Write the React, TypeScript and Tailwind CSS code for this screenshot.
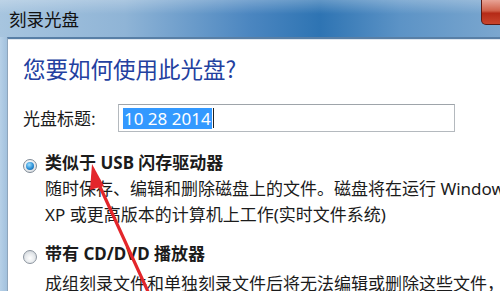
export default function App() {
  return (
    <div className="relative w-[500px] h-[291px] overflow-hidden bg-[#a9c8e3] font-['Noto_Sans','Noto_Sans_CJK_SC',sans-serif] text-[#1b1b1b]">
      {/* title bar */}
      <div className="relative flex h-[37px] items-start bg-[linear-gradient(90deg,#a7c5df_0%,#8fb4d6_25%,#4b86c0_50%,#2e74b3_64%,#5c93c6_80%,#7ba7cf_100%)]">
        <div className="absolute inset-x-0 top-0 h-[14px] bg-[linear-gradient(180deg,rgba(255,255,255,0.25),rgba(255,255,255,0))]" />
        <span className="relative ml-[9px] mt-[7px] font-['Noto_Sans_CJK_SC',sans-serif] text-[17.5px] leading-[24px] text-[#111]">刻录光盘</span>
        <div className="relative ml-auto mr-[-24px] h-[25px] w-[43px] rounded-b-[5px] border border-t-0 border-[#5a1a14] bg-[linear-gradient(180deg,#e8a395_0%,#d0614a_45%,#b52a17_55%,#c9452d_100%)]" />
      </div>
      {/* body */}
      <div className="flex h-[254px]">
        <div className="w-[7px] shrink-0 bg-[linear-gradient(90deg,#b6d0e7,#a2c1dd)]" />
        <div className="flex-1 border-l border-t-2 border-l-[#8ea5bb] border-t-[#587fa6] bg-white">
          <div className="h-full border-t border-[#dfe7ef] pl-[15px]">
            <div className="mt-[13px] font-['Noto_Sans_CJK_SC',sans-serif] text-[22.5px] leading-[30px] text-[#2340a0] whitespace-nowrap">您要如何使用此光盘?</div>
            <div className="mt-[21px] flex items-center">
              <span className="w-[95px] font-['Noto_Sans_CJK_SC',sans-serif] text-[17px] leading-[24px]">光盘标题:</span>
              <div className="flex h-[28px] w-[337px] items-center border border-[#b4b9be] border-t-[#9ea4aa] pl-[4px]">
                <span className="bg-[#3399ff] px-[1px] text-[17px] leading-[21px] text-white">10 28 2014</span>
                <span className="ml-[1px] h-[20px] w-[1px] bg-[#222]" />
              </div>
            </div>
            <div className="mt-[19px] flex items-center">
              <span className="mt-[6px] flex h-[14px] w-[14px] items-center justify-center rounded-full border border-[#7f8a96] bg-[radial-gradient(circle_at_40%_35%,#ffffff,#d4d9de)]">
                <span className="h-[8px] w-[8px] rounded-full bg-[radial-gradient(circle_at_40%_35%,#9fe0ff_0%,#2a8fd6_55%,#124e8c_100%)]" />
              </span>
              <span className="ml-[8px] text-[17px] font-bold leading-[24px] whitespace-nowrap">类似于 USB 闪存驱动器</span>
            </div>
            <div className="ml-[22px] mt-[1px] text-[17px] leading-[26px] whitespace-nowrap">
              <div>随时保存、编辑和删除磁盘上的文件。磁盘将在运行 Windows</div>
              <div>XP 或更高版本的计算机上工作(实时文件系统)</div>
            </div>
            <div className="mt-[14px] flex items-center">
              <span className="mt-[6px] h-[14px] w-[14px] rounded-full border border-[#8c959f] bg-[radial-gradient(circle_at_50%_60%,#ffffff_0%,#e6e9ec_50%,#c2c8ce_100%)]" />
              <span className="ml-[8px] text-[17px] font-bold leading-[24px] whitespace-nowrap">带有 CD/DVD 播放器</span>
            </div>
            <div className="ml-[22px] mt-[5px] text-[17px] leading-[26px] whitespace-nowrap">成组刻录文件和单独刻录文件后将无法编辑或删除这些文件，</div>
          </div>
        </div>
      </div>
      {/* red arrow overlay */}
      <svg className="pointer-events-none absolute left-0 top-0 z-10" width="500" height="291" viewBox="0 0 500 291">
        <line x1="150" y1="296" x2="96" y2="178" stroke="#e3262b" strokeWidth="3.2" strokeLinecap="round" />
        <polygon points="92,164 104,186 90,190" fill="#e3262b" />
      </svg>
    </div>
  );
}
